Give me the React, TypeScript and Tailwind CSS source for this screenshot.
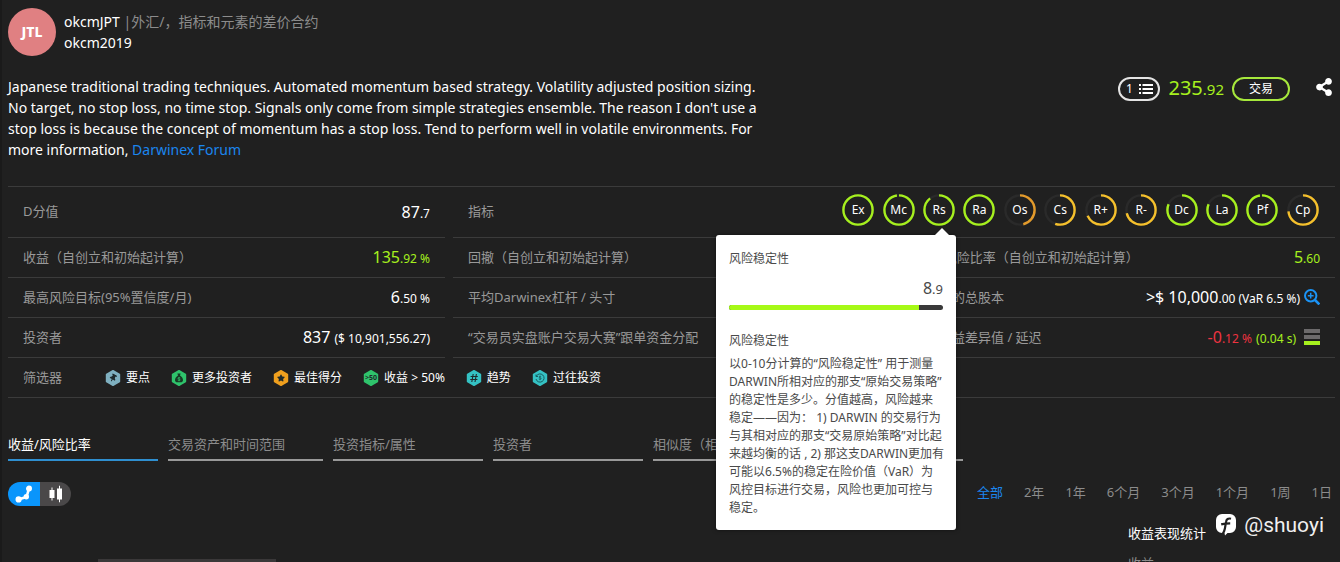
import React from 'react';
import { FaShareAlt, FaThumbtack, FaStar } from 'react-icons/fa';

const GREEN = '#a6f01e';
const YELLOW = '#f5c02c';
const ORANGE = '#e29a2b';

const rings = [
  { name: 'Ex', value: 1, color: GREEN },
  { name: 'Mc', value: 0.97, color: GREEN },
  { name: 'Rs', value: 0.89, color: GREEN },
  { name: 'Ra', value: 1, color: GREEN },
  { name: 'Os', value: 0.46, color: ORANGE },
  { name: 'Cs', value: 0.55, color: YELLOW },
  { name: 'R+', value: 0.68, color: YELLOW },
  { name: 'R-', value: 0.71, color: YELLOW },
  { name: 'Dc', value: 0.81, color: GREEN },
  { name: 'La', value: 0.81, color: GREEN },
  { name: 'Pf', value: 0.97, color: GREEN },
  { name: 'Cp', value: 0.73, color: YELLOW },
];

function Ring({ name, value, color }: { name: string; value: number; color: string }) {
  const length = 2 * Math.PI * 14.6;
  return (
    <div className="relative size-8">
      <button type="button" className="grid size-8 place-items-center text-xs text-white">
        <svg viewBox="0 0 32 32" className="col-start-1 row-start-1 size-8 -rotate-90" fill="none" strokeWidth="2.4">
          <circle cx="16" cy="16" r="14.6" stroke="#2a2a2a" />
          <circle cx="16" cy="16" r="14.6" stroke={color} strokeDasharray={`${length * value} ${length}`} />
        </svg>
        <span className="col-start-1 row-start-1">{name}</span>
      </button>
      {name === 'Rs' && <Tooltip />}
    </div>
  );
}

const explanation = [
  '以0-10分计算的“风险稳定性” 用于测量',
  'DARWIN所相对应的那支“原始交易策略”',
  '的稳定性是多少。分值越高，风险越来',
  '稳定——因为： 1) DARWIN 的交易行为',
  '与其相对应的那支“交易原始策略”对比起',
  '来越均衡的话 , 2) 那这支DARWIN更加有',
  '可能以6.5%的稳定在险价值（VaR）为',
  '风控目标进行交易，风险也更加可控与',
  '稳定。',
].join('\n');

function Tooltip() {
  return (
    <div
      role="tooltip"
      className="absolute -right-px top-[41px] z-10 w-60 rounded-[3px] bg-white px-[13px] pt-[15px] pb-[13px] text-xs leading-[18px] text-[#4a4a4a] shadow-[0_0_4px_rgba(0,0,0,0.5)]"
    >
      <svg className="absolute -top-[7px] right-[6px]" width="16" height="8" viewBox="0 0 16 8">
        <path d="M0 8 8 0l8 8z" fill="#fff" />
      </svg>
      <h3>风险稳定性</h3>
      <p className="mt-2 text-right text-base leading-6">
        8<span className="text-[13px]">.9</span>
      </p>
      <div className="mt-1 h-[5px] overflow-hidden rounded-sm bg-[#3a3a3a]">
        <div className="h-full w-[89%] bg-[#a6f916]" />
      </div>
      <h3 className="mt-[22px]">风险稳定性</h3>
      <p className="-mr-1 mt-[5px] whitespace-pre-line">{explanation}</p>
    </div>
  );
}

function Stat({ label, children }: { label: string; children?: React.ReactNode }) {
  return (
    <div className="flex h-10 items-center justify-between border-b border-[#3b3b3b] px-[15px]">
      <dt className="text-[13px] text-[#999]">{label}</dt>
      <dd className="flex items-center gap-1 pb-0.5 text-base text-white">{children}</dd>
    </div>
  );
}

function Small({ children }: { children: React.ReactNode }) {
  return <span className="text-xs">{children}</span>;
}

function Hex({ color, children }: { color: string; children: React.ReactNode }) {
  return (
    <span className="grid size-4 place-items-center text-[#1f2a2c]">
      <svg viewBox="0 0 16 16" className="col-start-1 row-start-1 size-4">
        <path
          d="M8 .8 14.4 4.4v7.2L8 15.2 1.6 11.6V4.4z"
          fill={color}
          stroke={color}
          strokeWidth="1.6"
          strokeLinejoin="round"
        />
      </svg>
      <span className="col-start-1 row-start-1 grid place-items-center">{children}</span>
    </span>
  );
}

const filters = [
  { label: '要点', color: '#7fb0c0', icon: <FaThumbtack className="size-2 rotate-30" /> },
  {
    label: '更多投资者',
    color: '#2fc46c',
    icon: (
      <svg viewBox="0 0 10 10" className="size-2.5">
        <path d="M3.4.6h3.2L6 2.4C7.8 3.6 9 5.3 9 7c0 1.500-1 2.300-2.400 2.300H3.400C2 9.300 1 8.500 1 7c0-1.700 1.200-3.400 3-4.600z" fill="#173c25" />
        <path d="M6.200 5c-.8-.7-2.300-.4-2.200.4.1.9 2.200.5 2.200 1.500 0 .8-1.600 1-2.400.3M5 4v4.200" stroke="#2fc46c" strokeWidth=".7" fill="none" />
      </svg>
    ),
  },
  { label: '最佳得分', color: '#f0a01e', icon: <FaStar className="size-2" /> },
  { label: '收益 > 50%', color: '#2fc46c', icon: <b className="text-[7px] leading-none">&gt;50</b> },
  {
    label: '趋势',
    color: '#35c2c4',
    icon: (
      <svg viewBox="0 0 10 10" className="size-2.5" fill="none" stroke="currentColor" strokeWidth="1.1">
        <path d="M4.200 1 2.800 9M7.400 1 6 9M1.600 3.500h7.200M1.200 6.500h7.200" />
      </svg>
    ),
  },
  {
    label: '过往投资',
    color: '#35c2c4',
    icon: (
      <svg viewBox="0 0 10 10" className="size-2.5" fill="none" stroke="#145457" strokeWidth=".9">
        <path d="M1.300 3.200A4.100 4.100 0 1 1 1 6M1 1.500v2h2" />
        <path d="M6.200 3.700c-.8-.7-2.300-.4-2.200.4.1.9 2.200.5 2.200 1.500 0 .8-1.600 1-2.400.3M5 2.700v4.400" strokeWidth=".7" />
      </svg>
    ),
  },
];

const tabs = ['收益/风险比率', '交易资产和时间范围', '投资指标/属性', '投资者', '相似度（相关性）', '评论'];
const ranges = ['全部', '2年', '1年', '6个月', '3个月', '1个月', '1周', '1日'];

export default function App() {
  return (
    <div
      lang="zh-CN"
      className="h-screen overflow-hidden border-l-2 border-[#1a1a1a] bg-[#202020] pt-2 pr-[5px] pl-1.5 font-['Noto_Sans','Noto_Sans_CJK_SC',sans-serif] text-white"
    >
      <header className="flex items-center gap-2">
        <div className="grid size-12 place-items-center rounded-full bg-[#e08082] text-sm font-extrabold">JTL</div>
        <div className="text-sm leading-[21px]">
          <h1>
            okcmJPT <span className="text-[#8c8c8c]">|外汇/，指标和元素的差价合约</span>
          </h1>
          <p>okcm2019</p>
        </div>
      </header>

      <section className="mt-5 flex items-start justify-between">
        <p className="w-[768px] text-sm leading-[21px]">
          Japanese traditional trading techniques. Automated momentum based strategy. Volatility adjusted position
          sizing. No target, no stop loss, no time stop. Signals only come from simple strategies ensemble. The reason I
          don't use a stop loss is because the concept of momentum has a stop loss. Tend to perform well in volatile
          environments. For more information,{' '}
          <a href="#forum" className="text-[#1b86ee]">
            Darwinex Forum
          </a>
        </p>
        <div className="flex items-center pr-0.5">
          <button
            type="button"
            className="flex h-6 w-[42px] items-center justify-center gap-1.5 rounded-full border-2 border-[#e4e4e4] text-xs"
          >
            1
            <svg viewBox="0 0 14 10" className="h-2.5 w-3.5" fill="currentColor">
              <path d="M0 0h2v2H0zM3.500 0H14v2H3.500zM0 4h2v2H0zM3.500 4H14v2H3.500zM0 8h2v2H0zM3.500 8H14v2H3.500z" />
            </svg>
          </button>
          <span className="mx-2 text-xl leading-6 text-[#a6f01e]">
            235<span className="text-[15px]">.92</span>
          </span>
          <button type="button" className="h-6 w-[58px] rounded-full border-2 border-[#a6e83c] text-xs leading-5">
            交易
          </button>
          <button type="button" aria-label="分享" className="mb-1 ml-[25px]">
            <FaShareAlt className="size-[18px]" />
          </button>
        </div>
      </section>

      <dl className="mt-[26px] grid grid-cols-3 gap-x-2 border-y border-[#3b3b3b]">
        <div className="flex h-[51px] items-center justify-between border-b border-[#3b3b3b] px-[15px]">
          <dt className="text-[13px] text-[#999]">D分值</dt>
          <dd className="text-base">
            87<Small>.7</Small>
          </dd>
        </div>
        <div className="col-span-2 flex h-[51px] items-center justify-between border-b border-[#3b3b3b] pr-3 pl-[15px]">
          <dt className="text-[13px] text-[#999]">指标</dt>
          <dd className="grid w-[485px] grid-cols-12 justify-items-center pb-1">
            {rings.map((ring) => (
              <Ring key={ring.name} {...ring} />
            ))}
          </dd>
        </div>

        <Stat label="收益（自创立和初始起计算）">
          <span className="text-[#a6f01e]">
            135<Small>.92 %</Small>
          </span>
        </Stat>
        <Stat label="回撤（自创立和初始起计算）" />
        <Stat label="收益/风险比率（自创立和初始起计算）">
          <span className="text-[#a6f01e]">
            5<Small>.60</Small>
          </span>
        </Stat>

        <Stat label="最高风险目标(95%置信度/月)">
          <span>
            6<Small>.50 %</Small>
          </span>
        </Stat>
        <Stat label="平均Darwinex杠杆 / 头寸" />
        <Stat label="可投资的总股本">
          <span>
            &gt;$ 10,000<Small>.00 (VaR 6.5 %)</Small>
          </span>
          <button type="button" aria-label="放大" className="text-[#1b93f5]">
            <svg viewBox="0 0 16 16" className="size-4" fill="none" stroke="currentColor">
              <circle cx="6.700" cy="6.700" r="5.700" strokeWidth="2" />
              <path d="m11 11 4.400 4.400" strokeWidth="2.600" />
              <path d="M6.700 3.800v5.800M3.800 6.700h5.800" strokeWidth="1.500" />
            </svg>
          </button>
        </Stat>

        <Stat label="投资者">
          <span>
            837 <Small>($ 10,901,556.27)</Small>
          </span>
        </Stat>
        <Stat label="“交易员实盘账户交易大赛”跟单资金分配" />
        <Stat label="累计收益差异值 / 延迟">
          <span className="text-[#ee3340]">
            -0<Small>.12 %</Small> <span className="text-xs text-[#a6f01e]">(0.04 s)</span>
          </span>
          <svg viewBox="0 0 16 16" className="ml-1 size-4">
            <path d="M0 0h16v4H0zM0 6h16v4H0z" fill="#6c6a6b" />
            <path d="M0 12h16v4H0z" fill="#a6f01e" />
          </svg>
        </Stat>

        <div className="col-span-3 flex h-[39px] items-center pl-[15px] text-xs">
          <dt className="w-[82px] text-[13px] text-[#999]">筛选器</dt>
          <dd className="flex gap-[21px]">
            {filters.map((filter) => (
              <a key={filter.label} href="#filter" className="flex items-center gap-[5px]">
                <Hex color={filter.color}>{filter.icon}</Hex>
                {filter.label}
              </a>
            ))}
          </dd>
        </div>
      </dl>

      <nav className="mt-9 flex gap-2.5 text-[13px]">
        {tabs.map((tab, i) => (
          <button
            key={tab}
            type="button"
            className={
              'h-[27px] border-b-2 pb-1 text-left whitespace-nowrap ' +
              (i === 0
                ? 'w-[150px] border-[#2f8fd0] text-white'
                : i === 1
                  ? 'w-[155px] border-[#999] text-[#8c8c8c]'
                  : 'w-[150px] border-[#999] text-[#8c8c8c]')
            }
          >
            {tab}
          </button>
        ))}
      </nav>

      <section className="flex items-start justify-between pt-[21px]">
        <div className="flex h-6 overflow-hidden rounded-full">
          <button type="button" aria-label="折线图" className="grid w-8 place-items-center bg-[#0a95fb]">
            <svg viewBox="0 0 18 18" className="size-[18px]" fill="none" stroke="#fff" strokeWidth="2.6">
              <path d="M3.200 14.600 11.500 12 14 3.600" strokeLinejoin="round" />
              <circle cx="3.600" cy="14.400" r="1.800" fill="#fff" />
              <circle cx="11.300" cy="11.800" r="1.400" fill="#fff" />
              <circle cx="14" cy="3.600" r="1.700" fill="#fff" />
            </svg>
          </button>
          <button type="button" aria-label="蜡烛图" className="grid w-[31px] place-items-center bg-[#4a4849]">
            <svg viewBox="0 0 14 18" className="h-[18px] w-3.5" fill="#fff">
              <path d="M.500 5H5.500v8H.500zM2.500 2.500h1v13h-1zM8 3.500h5v11H8zM10 .800h1v16.400h-1z" />
            </svg>
          </button>
        </div>
        <div className="flex gap-[21px] pr-[3px] text-[13px] leading-5">
          {ranges.map((range, i) => (
            <button key={range} type="button" className={i === 0 ? 'text-[#1b86ee]' : 'text-[#8c8c8c]'}>
              {range}
            </button>
          ))}
        </div>
      </section>

      <section className="flex items-start justify-between pt-[17px] text-[13px] leading-5">
        <div className="mt-9 ml-[90px] h-10 w-[178px] bg-[#3a3839]" />
        <div className="w-[207px]">
          <h2>收益表现统计</h2>
          <p className="mt-2.5 text-[#8c8c8c]">收益</p>
        </div>
      </section>

      <div className="absolute right-4 bottom-[21px] flex items-center gap-2 font-[Roboto,sans-serif] text-[21px] leading-8 text-[#f0f0f0]">
        <svg viewBox="0 0 20 22" className="h-[22px] w-5">
          <path d="M6 0h8a6 6 0 0 1 6 6v7a6 6 0 0 1-6 6h-2.500L9 21.500 8.500 19H6a6 6 0 0 1-6-6V6a6 6 0 0 1 6-6z" fill="#fff" />
          <path d="M15 4.800c-2.800-.9-4.600.4-5 3.200L8.900 14.500c-.4 2.200-1 3.400-2 4.800M5.200 10.400c2.800-.8 5.600-1.100 9-1.100" stroke="#202020" strokeWidth="2.200" fill="none" />
        </svg>
        @shuoyi
      </div>
    </div>
  );
}
